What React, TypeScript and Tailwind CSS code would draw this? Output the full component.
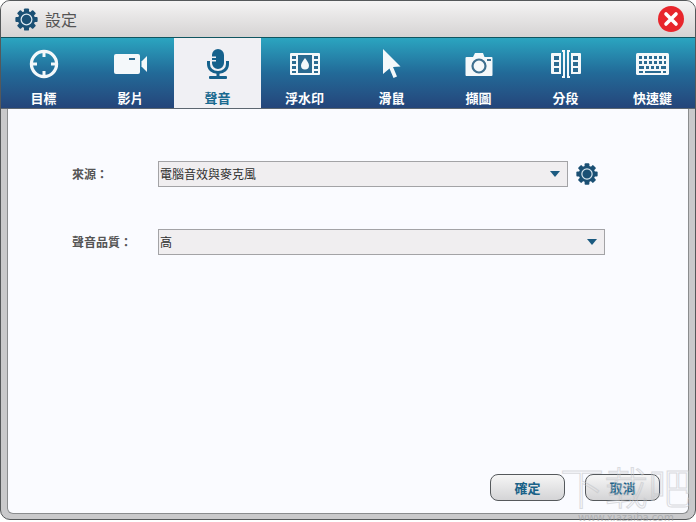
import React from "react";

const cjk = { fontFamily: '"Noto Sans CJK TC", "Liberation Sans", sans-serif' };

function Gear({ size }: { size: number }) {
  const teeth = [0, 45, 90, 135, 180, 225, 270, 315];
  return (
    <svg width={size} height={size} viewBox="0 0 24 24">
      {teeth.map((a) => (
        <rect key={a} x="9.400" y="0.400" width="5.200" height="5" rx="1" fill="#1b5074" transform={`rotate(${a} 12 12)`} />
      ))}
      <circle cx="12" cy="12" r="9" fill="#1b5074" />
      <circle cx="12" cy="12" r="5.600" fill="none" stroke="#dbe8f0" strokeWidth="1.300" />
      <circle cx="12" cy="12" r="3" fill="#1b5074" />
    </svg>
  );
}

function Caret() {
  return (
    <svg width="10" height="6" viewBox="0 0 10 6">
      <path d="M0 0H10L5 6Z" fill="#1b5a80" />
    </svg>
  );
}

const W = "#f4f8fa";
const B = "#2a6a90";

const icons: React.ReactNode[] = [
  <svg key="0" width="32" height="32" viewBox="0 0 32 32">
    <circle cx="16" cy="16" r="12.600" fill="none" stroke={W} strokeWidth="3.200" />
    <path d="M16 2v7M16 23v7M2 16h7M23 16h7" stroke={W} strokeWidth="3" />
  </svg>,
  <svg key="1" width="34" height="22" viewBox="0 0 34 22">
    <rect x="0" y="1" width="26" height="20" rx="2" fill={W} />
    <rect x="15" y="5" width="6" height="2" fill={B} />
    <path d="M27.500 8.500 33 3v16l-5.500-5.500Z" fill={W} />
  </svg>,
  <svg key="2" width="24" height="32" viewBox="0 0 24 32">
    <path d="M12 1a6 6 0 0 1 6 6v8a6 6 0 0 1-12 0v-1.500h4v-1.500H6V10h4V8.500H6V7a6 6 0 0 1 6-6Z" fill="#15618c" />
    <path d="M2.500 13v3c0 5 4 8.500 9.500 8.500s9.500-3.500 9.500-8.500v-3" fill="none" stroke="#15618c" strokeWidth="3" />
    <rect x="10.500" y="25" width="3" height="4" fill="#15618c" />
    <rect x="3" y="28" width="18" height="3" rx="1" fill="#15618c" />
  </svg>,
  <svg key="3" width="30" height="22" viewBox="0 0 30 22">
    <rect x="0" y="0" width="30" height="22" rx="1" fill={W} />
    <rect x="8" y="2" width="14" height="18" fill={B} />
    <path d="M2 3h4v3H2zM2 8h4v3H2zM2 13h4v3H2zM2 18h4v2H2zM24 3h4v3h-4zM24 8h4v3h-4zM24 13h4v3h-4zM24 18h4v2h-4z" fill={B} />
    <path d="M15 5c2 3 4 5 4 7.500a4 4 0 0 1-8 0C11 10 13 8 15 5Z" fill={W} />
  </svg>,
  <svg key="4" width="19" height="29" viewBox="0 0 19 29">
    <path d="M1 0 18.500 17.500 11 18l4 9.500-3.500 1.500-4-9.500L1 25Z" fill={W} />
  </svg>,
  <svg key="5" width="28" height="24" viewBox="0 0 28 24">
    <path d="M1.500 5H8l2-4h8l1.500 4h7a1 1 0 0 1 1 1v17a1 1 0 0 1-1 1h-25a1 1 0 0 1-1-1V6a1 1 0 0 1 1-1Z" fill={W} />
    <circle cx="14" cy="14" r="6.500" fill="none" stroke="#3d6f8f" strokeWidth="2.200" />
    <rect x="22" y="7" width="4" height="2" fill="#3d6f8f" />
  </svg>,
  <svg key="6" width="30" height="28" viewBox="0 0 30 28">
    <path d="M0 4a1 1 0 0 1 1-1h9v21H1a1 1 0 0 1-1-1ZM20 3h9a1 1 0 0 1 1 1v19a1 1 0 0 1-1 1h-9Z" fill={W} />
    <path d="M3 6h5v4H3zM3 12h5v4H3zM3 18h5v4H3zM22 6h5v4h-5zM22 12h5v4h-5zM22 18h5v4h-5z" fill={B} />
    <path d="M14 1h-3M13 1v26M14 27h-3M16 1h3M17 1v26M16 27h3" stroke={W} strokeWidth="2" fill="none" />
  </svg>,
  <svg key="7" width="33" height="22" viewBox="0 0 33 22">
    <rect x="0" y="0" width="33" height="22" rx="1.500" fill={W} />
    <path d="M3 3h3v3H3zM8 3h3v3H8zM13 3h3v3h-3zM18 3h3v3h-3zM23 3h3v3h-3zM28 3h2v3h-2zM3 8h3v3H3zM8 8h3v3H8zM13 8h3v3h-3zM18 8h3v3h-3zM23 8h3v3h-3zM28 8h2v3h-2zM3 13h5v3H3zM10 13h3v3h-3zM15 13h3v3h-3zM20 13h3v3h-3zM25 13h5v3h-5zM3 18h4v2H3zM9 18h16v2H9zM27 18h3v2h-3z" fill={B} />
  </svg>,
];

const tabs = ["目標", "影片", "聲音", "浮水印", "滑鼠", "擷圖", "分段", "快速鍵"];

function Select({ value, className }: { value: string; className: string }) {
  return (
    <div className={`flex h-[26px] items-center justify-between border border-[#a3a3a6] bg-[#f0eef0] pl-[1px] pr-[7px] text-[12px] text-[#2d2d2d] ${className}`}>
      <span>{value}</span>
      <Caret />
    </div>
  );
}

function Btn({ children }: { children: React.ReactNode }) {
  return (
    <div className="flex h-[27px] w-[75px] items-center justify-center rounded-[8px] border border-[#55595c] bg-gradient-to-b from-[#f6f6f6] to-[#d4d4d6] text-[13px] font-bold text-[#1a6288]">
      {children}
    </div>
  );
}

export default function App() {
  return (
    <div style={cjk} className="relative h-[522px] w-[696px] overflow-hidden bg-white">
      <div className="flex h-[520px] w-[696px] flex-col overflow-hidden rounded-[10px] border border-[#55585a] bg-[#c9c9cb]">
        <div className="flex h-[36px] shrink-0 items-center justify-between bg-gradient-to-b from-[#f5f4f4] to-[#d5d3d3] pl-[14px] pr-[10px]">
          <div className="flex items-center gap-[7px]">
            <Gear size={23} />
            <span className="text-[16px] text-[#555]">設定</span>
          </div>
          <svg width="28" height="28" viewBox="0 0 28 28">
            <circle cx="14" cy="14" r="13" fill="#e8262c" />
            <path d="M9 9l10 10M19 9 9 19" stroke="#fff" strokeWidth="3.600" strokeLinecap="round" />
          </svg>
        </div>
        <div className="-mx-px grid h-[72px] shrink-0 grid-cols-8 border-y border-t-[#0f5560] border-b-[#5c6670] bg-gradient-to-b from-[#2ba5c0] via-[#226a98] to-[#24457a]">
          {tabs.map((t, i) => (
            <div key={t} className={`flex flex-col items-center ${i === 2 ? "bg-[#f0f0f4] text-[#1a6a90]" : "text-white"}`}>
              <div className="flex h-[50px] w-full items-center justify-center pt-[1px]">{icons[i]}</div>
              <span className="text-[13px] font-bold leading-[20px]">{t}</span>
            </div>
          ))}
        </div>
        <div className="mx-[6px] mb-[5px] flex min-h-0 flex-1 flex-col rounded-b-[6px] border-x border-b border-[#8a8c8e] bg-[#fafbff]">
          <div className="flex flex-col gap-[42px] pl-[64px] pt-[52px]">
            <div className="flex items-center">
              <span className="w-[86px] text-[12px] font-bold text-[#555]">來源：</span>
              <Select value="電腦音效與麥克風" className="w-[410px]" />
              <div className="ml-[8px]"><Gear size={22} /></div>
            </div>
            <div className="flex items-center">
              <span className="w-[86px] text-[12px] font-bold text-[#555]">聲音品質：</span>
              <Select value="高" className="w-[447px]" />
            </div>
          </div>
          <div className="mt-auto flex justify-end gap-[20px] pb-[12px] pr-[28px]">
            <Btn>確定</Btn>
            <Btn>取消</Btn>
          </div>
        </div>
      </div>
      <div className="pointer-events-none absolute bottom-0 right-[4px] flex flex-col items-center opacity-60">
        <span className="text-[44px] font-light leading-[50px] text-transparent [-webkit-text-stroke:1px_#c4c6ca]" style={{ fontFamily: '"Noto Sans CJK SC", sans-serif' }}>下载吧</span>
        <span className="text-[11px] leading-[11px] text-[#9a9ca0]">www.xiazaiba.com</span>
      </div>
    </div>
  );
}
